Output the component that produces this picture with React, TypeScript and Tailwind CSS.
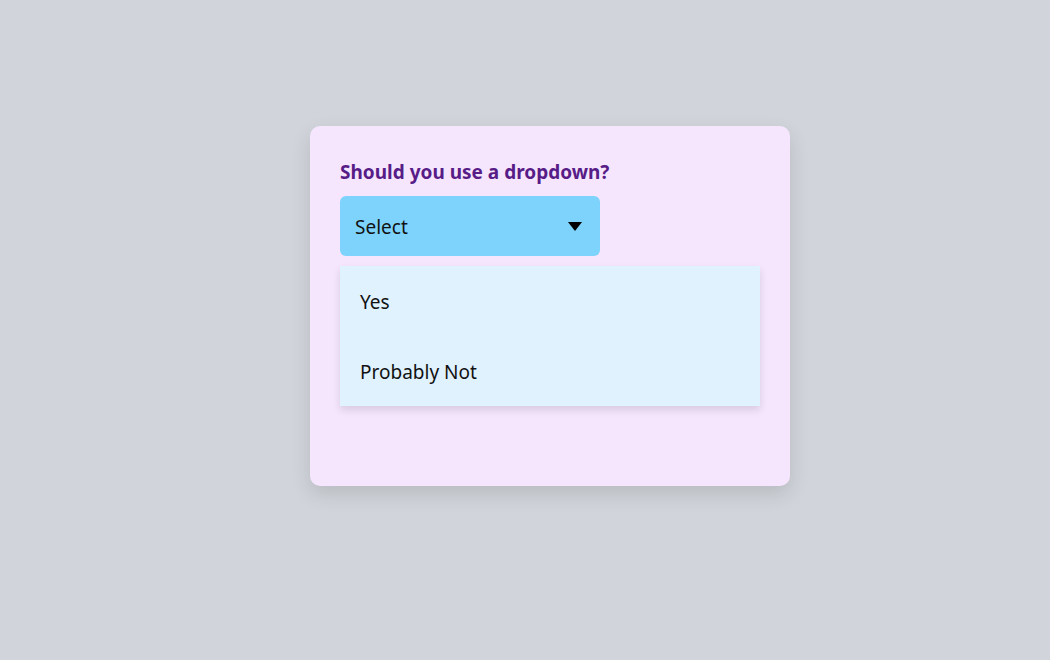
import React from 'react';

const options = ['Yes', 'Probably Not'];

export default function App() {
  return (
    <div className="min-h-[660px] w-full bg-[#d1d5db] pl-[310px] pt-[126px] font-['Noto_Sans',sans-serif]">
      <div className="flex h-[360px] w-[480px] flex-col rounded-[10px] bg-[#f5e6fe] p-[30px] shadow-[0_8px_20px_rgba(0,0,0,0.12)]">
        <h2 className="text-[19px] font-bold leading-[32px] text-[#581c87]">Should you use a dropdown?</h2>
        <button className="mt-[8px] flex h-[60px] w-[260px] items-center justify-between rounded-[6px] bg-[#7dd3fc] pl-[15px] pr-[18px] text-[19px] text-[#111]">
          <span className="pt-[2px]">Select</span>
          <svg width="14" height="9" viewBox="0 0 14 9">
            <path d="M0 0 H14 L7 9 Z" fill="#000" />
          </svg>
        </button>
        <ul className="mt-[10px] w-[420px] bg-[#e0f2fe] shadow-[0_4px_8px_rgba(0,0,0,0.12)]">
          {options.map((o) => (
            <li key={o} className="flex h-[70px] items-center px-[20px] pt-[2px] text-[19px] text-[#111]">
              {o}
            </li>
          ))}
        </ul>
      </div>
    </div>
  );
}
